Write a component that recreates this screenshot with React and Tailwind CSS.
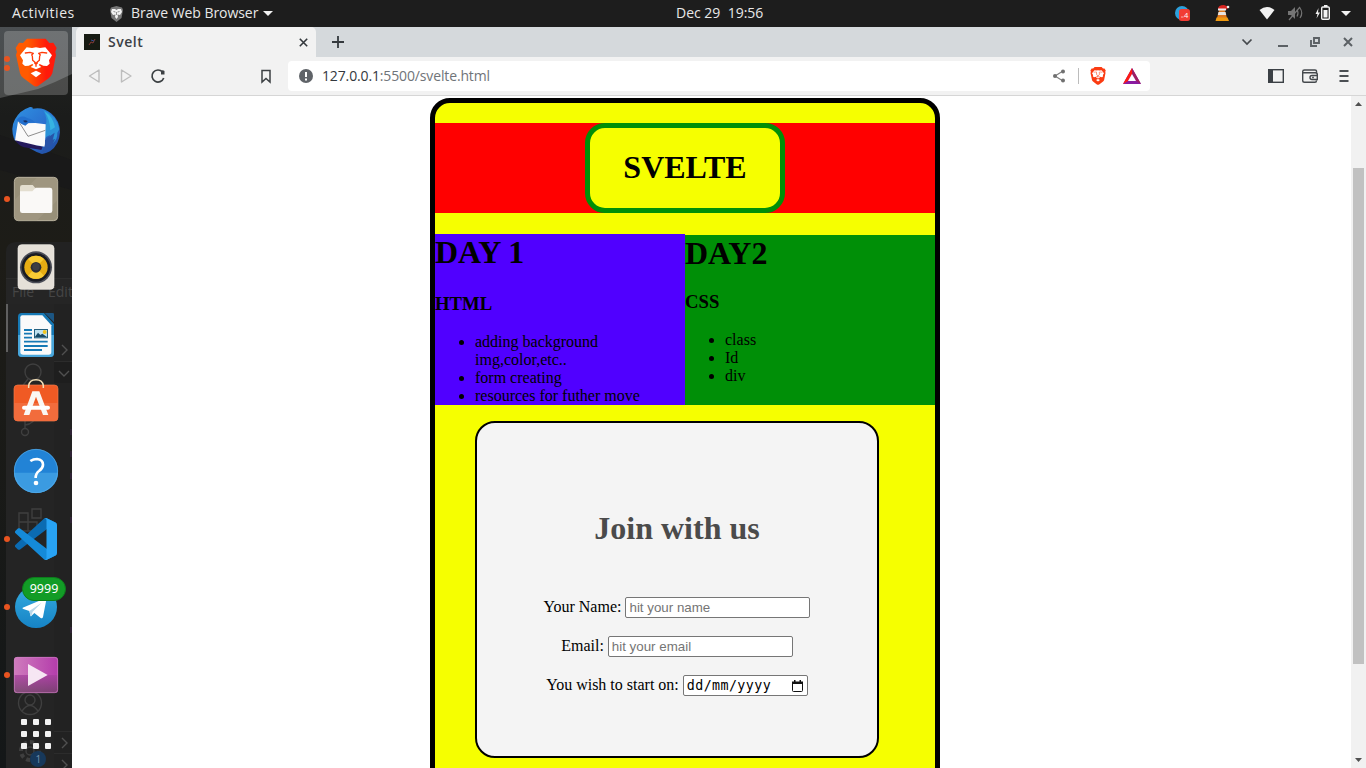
import React from "react";

const UI = "font-['Open_Sans','Noto_Sans',sans-serif]";

function Lion({ className, flat, x0 = "#ff5a00", x1 = "#ff1a0a", face = "#fff", id }) {
  return (
    <svg className={className} viewBox="36 42 144 144" overflow="visible">
      <defs>
        <linearGradient id={id}>
          <stop offset="0.3" stopColor={x0} />
          <stop offset="0.75" stopColor={x1} />
        </linearGradient>
      </defs>
      <path
        d="M81 41H137L148 54L160 53L170 69L166 80L168 90L157 145Q154 154 146 160L117 181Q108 188 99 181L71 160Q62 154 60 145L48 90L51 80L47 69L57 53L69 54Z"
        fill={flat || "url(#" + id + ")"}
      />
      <path
        d="M80 67L96 69L108 67L120 69L136 67L156 91L147 106L149 116L141 123L130 122L119 117L116 120L124 126L108 133L92 126L100 120L97 117L86 122L75 123L67 116L69 106L60 91Z"
        fill={face}
      />
      <path d="M108 137L124 145L108 157L92 145Z" fill={face} />
      <g fill="none" stroke={flat || "#ff3a08"} strokeWidth="4" strokeLinecap="round" strokeLinejoin="round">
        <path d="M76 84L90 82L100 85L95 90M140 84L126 82L116 85L121 90" />
        <path d="M97 93L98 106L105 112M119 93L118 106L111 112" />
        <path d="M104 114H112L108 118ZM108 118V124" />
      </g>
    </svg>
  );
}

function Thunderbird() {
  return (
    <svg className="size-12 overflow-visible" viewBox="36 51 144 144">
      <defs>
        <linearGradient id="tb" x1="0" y1="0" x2="1" y2="1">
          <stop offset="0" stopColor="#2f93e2" />
          <stop offset="0.5" stopColor="#2a70cf" />
          <stop offset="1" stopColor="#1f479c" />
        </linearGradient>
      </defs>
      <path d="M90 51Q100 50 98 56Q130 50 153 70Q180 92 180 127Q178 165 150 184Q138 191 126 192L110 186L43 150Q30 115 45 88Q60 60 90 51Z" fill="url(#tb)" />
      <path d="M130 60Q172 78 178 118L172 128Q173 148 158 160L160 146L145 162L150 135Q138 140 133 147L136 108Q145 88 130 60Z" fill="#2b93d8" />
      <path d="M134 65Q160 80 165 112L151 121Q150 88 134 65Z" fill="#36b3e2" />
      <path d="M43 146Q75 144 108 166L128 170L124 180L112 178L72 172Q52 164 43 146Z" fill="#24195c" />
      <path d="M54 94L70 100L106 99L137 103L135 170L108 166L45 151Z" fill="#fafafa" />
      <path d="M57 96L84 139L136 121" fill="none" stroke="#777" strokeWidth="2.5" />
      <path d="M50 91Q60 73 82 84Q101 89 106 99Q89 92 76 107Q64 104 50 91Z" fill="#2370ce" />
      <path d="M69 92Q77 88 83 94Q77 102 69 92Z" fill="#183166" />
      <path d="M151 137L164 128L158 150L166 146Q154 175 121 191Q137 178 135 151Z" fill="#2854a8" />
    </svg>
  );
}

function Files() {
  return (
    <svg className="size-12" viewBox="36 255 144 144">
      <rect x="43" y="262" width="130" height="130" rx="12" fill="#989079" stroke="#bbb39f" strokeWidth="3" />
      <path d="M43 330L110 264H162Q173 264 173 275V330L110 392H55Q43 392 43 380Z" fill="#a39b86" opacity=".6" />
      <path d="M60 292Q60 285 67 285H98L106 294V315H60Z" fill="#e3decf" />
      <path d="M60 304H97L107 293H150Q157 293 157 300V362Q157 369 150 369H67Q60 369 60 362Z" fill="#faf9f7" />
    </svg>
  );
}

function Speaker() {
  return (
    <svg className="size-12" viewBox="36 459 144 144">
      <rect x="54" y="464" width="108" height="134" rx="11" fill="#e5e0d8" stroke="#f2eee8" strokeWidth="2" />
      <circle cx="108" cy="532" r="48" fill="#4a4c56" />
      <circle cx="108" cy="532" r="43" fill="#191b22" />
      <circle cx="108" cy="532" r="35" fill="#e6ac13" />
      <path d="M84 507A35 35 0 0 1 132 507L108 532ZM84 557A35 35 0 0 0 132 557L108 532Z" fill="#f8cb34" />
      <circle cx="108" cy="532" r="16" fill="#2d2e34" />
      <circle cx="108" cy="530" r="11" fill="#3d3e44" />
    </svg>
  );
}

function Writer() {
  return (
    <svg className="size-12" viewBox="36 33 144 144">
      <path d="M65 39H132L162 72V160Q162 171 151 171H65Q54 171 54 160V50Q54 39 65 39Z" fill="#1679b5" />
      <path d="M54 105H162V160Q162 171 151 171H65Q54 171 54 160Z" fill="#49a6da" />
      <path d="M134 39H158Q162 39 162 43V67Z" fill="#1c5683" />
      <path d="M67 46H127L154 76V156Q154 164 146 164H70Q61 164 61 156V52Q61 46 67 46Z" fill="#fafafa" />
      <path d="M72 90H96M72 101H96M72 113H96M72 125H143M72 138H143M72 150H126" stroke="#1679b5" strokeWidth="5.500" />
      <rect x="102" y="87" width="42" height="28" fill="#25607f" />
      <rect x="105" y="90" width="36" height="22" fill="#bfe1ef" />
      <circle cx="134" cy="96" r="6" fill="#f0c31c" />
      <path d="M104 112L114 98L121 105L127 101L142 112Z" fill="#174966" />
    </svg>
  );
}

function Software() {
  return (
    <svg className="size-12 overflow-visible" viewBox="36 237 144 144">
      <rect x="42" y="255" width="132" height="108" rx="11" fill="#f05a24" stroke="#f57b4c" strokeWidth="2" />
      <path d="M42 309H174V352Q174 363 163 363H53Q42 363 42 352Z" fill="#f26c3c" />
      <path d="M86 264V257Q88 239 108 239Q128 239 130 257V264" fill="none" stroke="#f4dfb7" strokeWidth="4.5" />
      <path d="M97 274H118L145 345H129L108 290L88 345H71Z" fill="#faf7f3" />
      <rect x="66" y="317" width="84" height="12" rx="6" fill="#fff" />
    </svg>
  );
}

function Help() {
  return (
    <svg className="size-12" viewBox="36 441 144 144">
      <circle cx="108" cy="513" r="66" fill="#2283d6" />
      <path d="M42 518H174A66 61 0 0 1 42 518Z" fill="#3b9be1" />
      <circle cx="108" cy="513" r="65" fill="none" stroke="#58aee9" strokeWidth="2" />
      <path d="M91 483Q100 477 111 477Q129 479 129 494Q129 504 117 513Q107 520 107 534" fill="none" stroke="#fff" strokeWidth="8" />
      <circle cx="108" cy="549" r="7" fill="#fff" />
    </svg>
  );
}

function Code() {
  return (
    <svg className="size-[42px] overflow-visible" viewBox="0 0 100 100">
      <path d="M96.46 10.8L75.86.87C73.47-.27 70.62.2 68.75 2.08L1.3 63.58C-.52 65.23-.51 68.08 1.3 69.74L6.81 74.75C8.3 76.1 10.53 76.2 12.13 74.99L93.36 13.37C96.09 11.3 100 13.25 100 16.67V16.43C100 14.03 98.63 11.84 96.46 10.8Z" fill="#0b6bb2" />
      <path d="M96.46 89.2L75.86 99.13C73.47 100.27 70.62 99.8 68.75 97.92L1.3 36.42C-.52 34.77-.51 31.92 1.3 30.26L6.81 25.25C8.3 23.9 10.53 23.8 12.13 25.01L93.36 86.63C96.09 88.7 100 86.75 100 83.33V83.57C100 85.97 98.63 88.16 96.46 89.2Z" fill="#158ad8" />
      <path d="M75.86 99.13C73.47 100.27 70.62 99.79 68.75 97.92C71.06 100.22 75 98.59 75 95.33V4.67C75 1.41 71.06-.23 68.75 2.08C70.62.21 73.47-.28 75.86.87L96.46 10.77C98.62 11.81 100 14 100 16.4V83.6C100 86 98.62 88.19 96.46 89.23Z" fill="#28a3f4" />
    </svg>
  );
}

function Telegram() {
  return (
    <svg className="size-12" viewBox="36 159 144 144">
      <defs>
        <linearGradient id="tg" x2="0" y2="1">
          <stop stopColor="#35ace0" />
          <stop offset="1" stopColor="#1683c5" />
        </linearGradient>
      </defs>
      <circle cx="108" cy="231" r="63" fill="url(#tg)" />
      <path d="M68 233L136 205Q140 204 139 209L129 261Q127 267 121 263L103 249L94 258Q91 260 91 255L88 243L70 237Q66 235 68 233Z" fill="#fff" />
      <path d="M88 243L125 218L98 245L94 258Q91 260 91 255Z" fill="#b9d7e9" />
    </svg>
  );
}

function Video() {
  return (
    <svg className="size-12" viewBox="36 363 144 144">
      <defs>
        <linearGradient id="va">
          <stop stopColor="#cf7cbd" />
          <stop offset="1" stopColor="#b43cab" />
        </linearGradient>
        <linearGradient id="vb" x2="0" y2="1">
          <stop stopColor="#a63f9e" />
          <stop offset="1" stopColor="#67405f" />
        </linearGradient>
      </defs>
      <rect x="42" y="381" width="132" height="108" rx="9" fill="url(#va)" />
      <path d="M42 435H174V480Q174 489 165 489H51Q42 489 42 480Z" fill="url(#vb)" opacity=".75" />
      <rect x="43" y="382" width="130" height="106" rx="9" fill="none" stroke="#cf82c3" strokeWidth="2" />
      <path d="M84 402L143 435L84 468Z" fill="#f6e6f3" />
    </svg>
  );
}

function DockBackdrop() {
  return (
    <svg className="absolute inset-0 h-[741px] w-[72px]" viewBox="0 27 72 741">
      <defs>
        <linearGradient id="sky" x2="0" y2="1">
          <stop stopColor="#4b4f52" />
          <stop offset="1" stopColor="#484a49" />
        </linearGradient>
        <linearGradient id="ground" x2="0" y2="1">
          <stop stopColor="#232622" />
          <stop offset="0.12" stopColor="#1b1c1b" />
          <stop offset="0.3" stopColor="#1d1c17" />
          <stop offset="1" stopColor="#141718" />
        </linearGradient>
      </defs>
      <rect y="27" width="72" height="741" fill="url(#ground)" />
      <path d="M0 27H72V74L55 82L38 89L0 98Z" fill="url(#sky)" />
      <path d="M0 135L72 160V190L0 170Z" fill="#191919" />
      <path d="M6 768V252Q6 242 16 242H72V768Z" fill="#222" />
      <path d="M6 278H72V304H6Z" fill="#252525" />
      <path d="M6 304H54V768H6Z" fill="#242424" />
      <path d="M54 361H72V383H54Z" fill="#1e1e1e" />
      <path d="M6 278.5H72M54 361.500H72M54 731.500H72M54 753.500H72" stroke="#2c2c2c" />
      <path d="M7 304V352" stroke="#606060" strokeWidth="2" />
      <g fill="none" stroke="#3f3f3f" strokeWidth="1.4">
        <path d="M62 345L67 350L62 355M59 371L64 376L69 371M62 738L67 743L62 748M62 760L67 765L62 770" stroke="#505050" />
        <circle cx="33" cy="372" r="8" />
        <path d="M28 379L21 388M25 428V409M25 425Q35 424 36 414" />
        <circle cx="25" cy="432" r="3.500" />
        <path d="M19 513H28V531H19ZM19 522H37V531H28M32 509H41V518H32Z" />
        <circle cx="30" cy="703" r="11.500" />
        <circle cx="30" cy="700" r="5" />
        <path d="M22 711Q30 700 38 711" />
        <circle cx="30" cy="751" r="9" strokeWidth="4" strokeDasharray="4 3" />
        <circle cx="30" cy="751" r="4" />
      </g>
      <circle cx="38" cy="759" r="8" fill="#17385a" />
      <g fontFamily="Open Sans, sans-serif" fill="#464646">
        <text x="12" y="297" fontSize="14">File</text>
        <text x="48" y="297" fontSize="14">Edit</text>
        <text x="35.500" y="763" fontSize="10" fill="#7390ab">1</text>
      </g>
      <path d="M71 429V435M71 451V457M71 473V479M71 517V523M71 627V633" stroke="#35243d" strokeWidth="1.500" />
    </svg>
  );
}

function DockItem({ dots = 0, active, children }) {
  return (
    <div className="relative flex h-[68px] w-[72px] shrink-0 items-center justify-center">
      {active && <div className="absolute inset-x-1 inset-y-0.5 rounded bg-white/20" />}
      <div className="absolute top-0 left-1 flex h-full flex-col justify-center gap-[3px]">
        {Array.from({ length: dots }, (_, i) => (
          <div key={i} className="size-1.5 rounded-full bg-[#e95420]" />
        ))}
      </div>
      <div className="relative flex">{children}</div>
    </div>
  );
}

function Dock() {
  return (
    <aside className="relative flex h-[741px] w-[72px] shrink-0 flex-col items-center overflow-hidden pt-0.5">
      <DockBackdrop />
      <DockItem dots={2} active>
        <Lion className="size-12" id="lionDock" />
      </DockItem>
      <DockItem><Thunderbird /></DockItem>
      <DockItem dots={1}><Files /></DockItem>
      <DockItem><Speaker /></DockItem>
      <DockItem><Writer /></DockItem>
      <DockItem><Software /></DockItem>
      <DockItem><Help /></DockItem>
      <DockItem dots={1}><Code /></DockItem>
      <DockItem dots={1}>
        <Telegram />
        <div className="absolute -top-[6px] left-[10px] flex h-6 w-11 items-center justify-center rounded-full border border-[#0d7d1c] bg-[#129c26] font-['Noto_Sans',sans-serif] text-[12.5px] text-white">
          9999
        </div>
      </DockItem>
      <DockItem dots={1}><Video /></DockItem>
      <div className="relative mt-[10px] grid grid-cols-3 gap-1.5">
        {Array.from({ length: 9 }, (_, i) => (
          <div key={i} className="size-1.5 rounded-[1px] bg-[#f2f2f2]" />
        ))}
      </div>
    </aside>
  );
}

function TopBar() {
  return (
    <header className={"flex h-[27px] w-full items-center bg-[#1d1d1d] text-[14px] text-[#e8e8e8] " + UI}>
      <div className="w-[98px] pb-0.5 pl-3 text-[14px] tracking-[0.5px]">Activities</div>
      <div className="flex w-[578px] items-center pl-[11px]">
        <svg className="mr-[7px] h-4 w-[15px]" viewBox="0 0 15 16">
          <path d="M2 1.500L7.500 0L13 1.500L14 4L12.500 12L7.500 16L2.500 12L1 4Z" fill="#777" />
          <path d="M3 3H6L7.500 4L9 3H12L13 6L11 9L8.500 8.500L9 11L7.500 13L6 11L6.500 8.500L4 9L2 6Z" fill="#f2f2f2" />
          <path d="M4.500 5.500L6.500 6M10.500 5.500L8.500 6M7.500 6V9" stroke="#777" strokeWidth=".8" />
        </svg>
        <span className="pb-0.5 text-[14px] tracking-[-0.06px]">Brave Web Browser</span>
        <svg className="ml-[5px] h-[5px] w-[10px]" viewBox="0 0 10 5"><path d="M0 0H10L5 5Z" fill="#f2f2f2" /></svg>
      </div>
      <div className="w-[498px] pb-0.5 text-[14px] whitespace-pre">Dec 29  19:56</div>
      <svg className="h-[27px] w-[192px]" viewBox="1174 0 192 27">
        <circle cx="1182" cy="13" r="7" fill="#2ca0dc" />
        <rect x="1179" y="9" width="11" height="12" rx="2.500" fill="#f23c34" />
        <text x="1184" y="18" fontSize="7.500" fontFamily="Open Sans, sans-serif" fill="#fff">4</text>
        <path d="M1181 17H1183.500" stroke="#f9b3ae" />
        <path d="M1219.500 9H1224.500L1227 18H1217Z" fill="#e07a20" />
        <path d="M1218.500 12H1225.500L1226.200 15H1217.800Z" fill="#e8e4e0" />
        <path d="M1216.500 17.500H1227.500L1229 21H1215.500Z" fill="#f09a10" />
        <path d="M1218 9Q1218 5 1224 5L1229 7L1226 10Z" fill="#d92420" />
        <path d="M1218 9.500H1226" stroke="#eee" strokeWidth="2" />
        <circle cx="1228" cy="7" r="1.300" fill="#eee" />
        <path d="M1259.500 10Q1267 4 1274.500 10L1267 19.500Z" fill="#f2f2f2" />
        <path d="M1288 11H1291L1295 7V19L1291 15H1288Z" fill="#757575" />
        <path d="M1289 20L1300 7M1297 9.500Q1299 13 1297 16.500M1300 8Q1303.500 13 1300 18" fill="none" stroke="#757575" strokeWidth="1.200" />
        <path d="M1318.500 8L1315.500 14H1317.500L1316.500 18.500L1320 12.500H1318Z" fill="#f2f2f2" />
        <rect x="1321.700" y="7" width="7.600" height="12.300" rx="1" fill="none" stroke="#f2f2f2" strokeWidth="1.400" />
        <path d="M1324 5H1327.500V7H1324ZM1323.500 10H1327.500V17.500H1323.500Z" fill="#f2f2f2" />
        <path d="M1341 11H1351L1346 16Z" fill="#f2f2f2" />
      </svg>
    </header>
  );
}

function TabStrip() {
  return (
    <div className="flex h-[30px] items-stretch bg-[#d5d9dc] pl-1">
      <div className={"flex w-60 items-center rounded-t-[5px] bg-[#f2f2f2] pl-2 " + UI}>
        <svg className="size-4" viewBox="0 0 16 16">
          <rect width="16" height="16" fill="#171b13" />
          <path d="M5 11L7 8L9 9L11 5" fill="none" stroke="#873b35" />
          <path d="M7 6L10 7" stroke="#354d91" />
        </svg>
        <span className="ml-2 pb-0.5 text-[14px] font-semibold tracking-[0.5px] text-[#3b4045]">Svelt</span>
        <svg className="mr-[8px] ml-auto size-[9px]" viewBox="0 0 9 9"><path d="M.8.8L8.200 8.200M8.200.8L.8 8.200" stroke="#34393d" strokeWidth="1.600" /></svg>
      </div>
      <svg className="ml-4 h-[30px] w-3" viewBox="0 0 12 30"><path d="M6 9V21M0 15H12" stroke="#34393d" strokeWidth="1.800" /></svg>
      <svg className="ml-auto h-[30px] w-[130px]" viewBox="1236 27 130 30">
        <path d="M1242.500 39.500L1247 44L1251.500 39.500" fill="none" stroke="#45494d" strokeWidth="1.700" />
        <path d="M1278 46H1288" stroke="#5c6165" strokeWidth="2" />
        <path d="M1314 38H1319V43H1314ZM1311 40V46H1317" fill="none" stroke="#5c6165" strokeWidth="1.900" />
        <path d="M1344 38L1352 46M1352 38L1344 46" stroke="#5c6165" strokeWidth="2" />
      </svg>
    </div>
  );
}

function Toolbar() {
  return (
    <div className="flex h-[39px] items-center border-b border-[#d6d6d6] bg-[#f2f2f2]">
      <svg className="h-[38px] w-[216px]" viewBox="72 57 216 38">
        <path d="M99 70V82L89.500 76ZM121.500 70V82L131 76Z" fill="none" stroke="#bdbdbd" strokeWidth="1.400" strokeLinejoin="round" />
        <path d="M162.500 72A6 6 0 1 0 163.700 78" fill="none" stroke="#3c4043" strokeWidth="1.700" />
        <path d="M161 71Q162.500 69.500 164.500 71V74.500H161Z" fill="#3c4043" />
        <path d="M262 70.500H270V82L266 78.500L262 82Z" fill="none" stroke="#3c4043" strokeWidth="1.500" />
      </svg>
      <div className="flex h-[30px] w-[862px] items-center rounded bg-white">
        <svg className="ml-[11px] size-[14px]" viewBox="0 0 14 14">
          <circle cx="7" cy="7" r="7" fill="#5f6368" />
          <path d="M7 3V8M7 9.500V11.500" stroke="#fff" strokeWidth="2" />
        </svg>
        <div className={"ml-[9px] pb-px text-[14px] tracking-[-0.14px] text-[#707479] " + UI}>
          <span className="text-[#33383d]">127.0.0.1</span>:5500/svelte.html
        </div>
        <svg className="ml-auto h-[30px] w-[110px]" viewBox="1040 61 110 30">
          <path d="M1063 71L1055 76L1063 81" fill="none" stroke="#808080" strokeWidth="1.200" />
          <circle cx="1063" cy="71.500" r="2" fill="#707070" />
          <circle cx="1055" cy="76" r="2" fill="#707070" />
          <circle cx="1063" cy="80.500" r="2" fill="#707070" />
          <path d="M1078.500 68V84" stroke="#bcbcbc" />
          <svg x="1089" y="67" width="18" height="18" overflow="visible"><Lion id="lionBar" flat="#fb3b12" /></svg>
          <path d="M1132 68L1141 84H1123Z" fill="#8a1ba1" />
          <path d="M1132 68L1123 84L1128 81L1132 74Z" fill="#ff1a12" />
          <path d="M1132 68L1141 84L1136 81L1132 74Z" fill="#9e1f63" />
          <path d="M1132 74L1136 81H1128Z" fill="#fff" />
        </svg>
      </div>
      <svg className="ml-auto h-[38px] w-[108px]" viewBox="1258 57 108 38">
        <rect x="1268.700" y="69.700" width="14.600" height="12.600" fill="none" stroke="#3b4045" strokeWidth="1.400" />
        <path d="M1268 69H1273V83H1268Z" fill="#3b4045" />
        <path d="M1316.500 73V71Q1316.500 70 1315 70H1304.500Q1302.700 70 1302.700 71.500V80.500Q1302.700 82.300 1304.500 82.300H1315Q1316.500 82.300 1316.500 80.500M1303 72.800H1315Q1317.300 72.800 1317.300 74.500V79.500H1312Q1310 79.500 1310 77.500Q1310 75.500 1312 75.500H1317" fill="none" stroke="#45494d" strokeWidth="1.400" />
        <circle cx="1313" cy="77.500" r=".9" fill="#45494d" />
        <path d="M1339.500 71H1348.500M1339.500 76H1348.500M1339.500 81H1348.500" stroke="#4b4f53" strokeWidth="1.800" />
      </svg>
    </div>
  );
}

function Field({ label, placeholder }) {
  return (
    <label className="mb-[18px] flex h-[21px] items-center justify-center gap-1 leading-[18px]">
      <span className="pb-0.5">{label}</span>
      <input
        placeholder={placeholder}
        className="h-[21px] w-[185px] rounded-[2px] border border-[#767676] bg-white px-[3px] font-['Liberation_Sans',sans-serif] text-[13.333px] placeholder:text-[#757575]"
      />
    </label>
  );
}

function Page() {
  return (
    <main className="flex min-h-0 flex-1 bg-white font-['Liberation_Serif',serif] text-[16px] leading-[18px] text-black">
      <div className="min-w-0 flex-1 overflow-hidden pt-0.5 pl-[358px]">
        <div className="h-[720px] w-[510px] rounded-[20px] border-[5px] border-black bg-[#f6ff00] pt-5">
          <div className="flex h-[90px] justify-center bg-[#ff0000]">
            <h1 className="h-[90px] w-[200px] rounded-[20px] border-[5px] border-[#008f07] bg-[#f6ff00] pt-[21px] text-center text-[32px] leading-[37px] font-bold">
              SVELTE
            </h1>
          </div>
          <div className="mt-[21px] flex items-end">
            <section className="h-[171px] w-[250px] bg-[#5000ff]">
              <h1 className="text-[32px] leading-[37px] font-bold">DAY 1</h1>
              <h3 className="mt-[22px] text-[18.72px] leading-[21px] font-bold">HTML</h3>
              <ul className="mt-[19px] list-disc pl-10">
                <li>adding background<br />img,color,etc..</li>
                <li>form creating</li>
                <li>resources for futher move</li>
              </ul>
            </section>
            <section className="h-[170px] w-[250px] bg-[#008f07]">
              <h1 className="text-[32px] leading-[37px] font-bold">DAY2</h1>
              <h3 className="mt-[19px] text-[18.72px] leading-[21px] font-bold">CSS</h3>
              <ul className="mt-[19px] list-disc pl-10">
                <li>class</li>
                <li>Id</li>
                <li>div</li>
              </ul>
            </section>
          </div>
          <form className="mt-4 ml-10 h-[337px] w-[404px] rounded-[20px] border-2 border-black bg-[#f4f4f4] pt-[87px]">
            <h1 className="mb-[50px] text-center text-[32px] leading-[37px] font-bold text-[#4b4b4b]">Join with us</h1>
            <Field label="Your Name:" placeholder="hit your name" />
            <Field label="Email:" placeholder="hit your email" />
            <div className="flex h-[21px] items-center justify-center gap-1">
              <span className="pb-0.5">You wish to start on:</span>
              <div className="flex h-[21px] w-[125px] items-center rounded-[2px] border border-[#767676] bg-white pr-1 pl-[3px] font-['DejaVu_Sans_Mono',monospace] text-[13.333px] tracking-[0.4px]">
                dd/mm/yyyy
                <svg className="ml-auto h-[12px] w-[11px] shrink-0" viewBox="0 0 11 12">
                  <path d="M.5 2V10.500Q.5 11.500 1.500 11.500H9.500Q10.500 11.500 10.500 10.500V2" fill="none" stroke="#111" />
                  <path d="M0 1.500H11V4H0ZM2 0H3.500V2H2ZM7.500 0H9V2H7.500Z" fill="#111" />
                </svg>
              </div>
            </div>
          </form>
        </div>
      </div>
      <div className="flex w-[15px] shrink-0 flex-col items-center bg-[#f1f1f1]">
        <svg className="h-[15px] w-[15px]" viewBox="0 0 15 15"><path d="M4 10L7.500 6L11 10Z" fill="#505050" /></svg>
        <div className="mt-[57px] h-[496px] w-[11px] bg-[#c1c1c1]" />
        <svg className="mt-auto h-[15px] w-[15px]" viewBox="0 0 15 15"><path d="M4 5L7.500 9L11 5Z" fill="#505050" /></svg>
      </div>
    </main>
  );
}

export default function App() {
  return (
    <div className="flex h-[768px] w-[1366px] flex-col overflow-hidden">
      <TopBar />
      <div className="flex min-h-0 flex-1">
        <Dock />
        <div className="flex min-w-0 flex-1 flex-col">
          <TabStrip />
          <Toolbar />
          <Page />
        </div>
      </div>
    </div>
  );
}
